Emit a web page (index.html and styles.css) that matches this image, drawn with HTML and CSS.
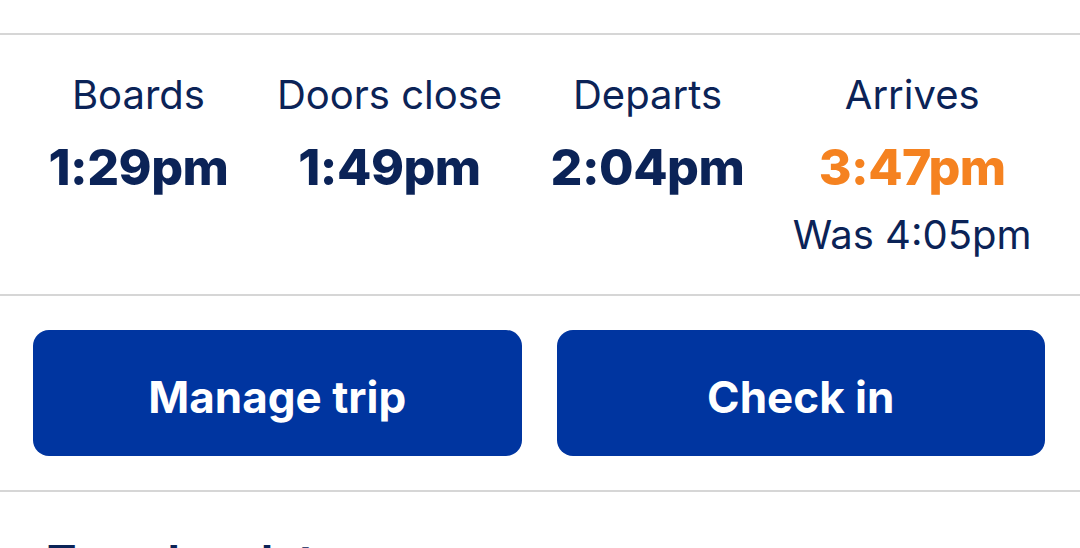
FILE: index.html
```html
<!DOCTYPE html>
<html lang="en">
<head>
  <meta charset="UTF-8">
  <title>Trip times</title>
  <link rel="stylesheet" href="styles.css">
</head>
<body>

  <div class="top-space"></div>

  <section class="times">
    <div class="time-col">
      <div class="label">Boards</div>
      <div class="time">1:29pm</div>
    </div>
    <div class="time-col">
      <div class="label">Doors close</div>
      <div class="time">1:49pm</div>
    </div>
    <div class="time-col">
      <div class="label">Departs</div>
      <div class="time">2:04pm</div>
    </div>
    <div class="time-col">
      <div class="label">Arrives</div>
      <div class="time changed">3:47pm</div>
      <div class="was">Was 4:05pm</div>
    </div>
  </section>

  <section class="actions">
    <button class="btn">Manage trip</button>
    <button class="btn">Check in</button>
  </section>

  <section class="next">
    <h2>Travel updates</h2>
  </section>

</body>
</html>
```

FILE: styles.css
```css
body {
  margin: 0;
  background: #fff;
  color: #0b2357;
  font-family: Inter, "Noto Sans", sans-serif;
  overflow: hidden;
}
.top-space {
  height: 33px;
  border-bottom: 2px solid #d6d6d6;
}
.times {
  display: flex;
  justify-content: space-evenly;
  padding: 36px 0 35px;
  border-bottom: 2px solid #d6d6d6;
}
.time-col {
  display: flex;
  flex-direction: column;
  align-items: center;
}
.label {
  font-size: 40px;
  line-height: 48px;
}
.time {
  margin-top: 18px;
  font-size: 50px;
  line-height: 60px;
  font-weight: 800;
  letter-spacing: -0.5px;
}
.time.changed { color: #f58220; }
.was {
  margin-top: 14px;
  font-size: 40px;
  line-height: 48px;
}
.actions {
  display: flex;
  gap: 35px;
  padding: 34px 35px 34px 33px;
  border-bottom: 2px solid #d6d6d6;
}
.btn {
  flex: 1;
  height: 126px;
  padding: 8px 0 0;
  border: none;
  border-radius: 16px;
  background: #0035a0;
  color: #fff;
  font-family: inherit;
  font-size: 44px;
  font-weight: 700;
}
.next {
  padding: 43px 47px 0;
}
.next h2 {
  margin: 0;
  font-size: 44px;
  line-height: 52px;
  font-weight: 700;
}
```
